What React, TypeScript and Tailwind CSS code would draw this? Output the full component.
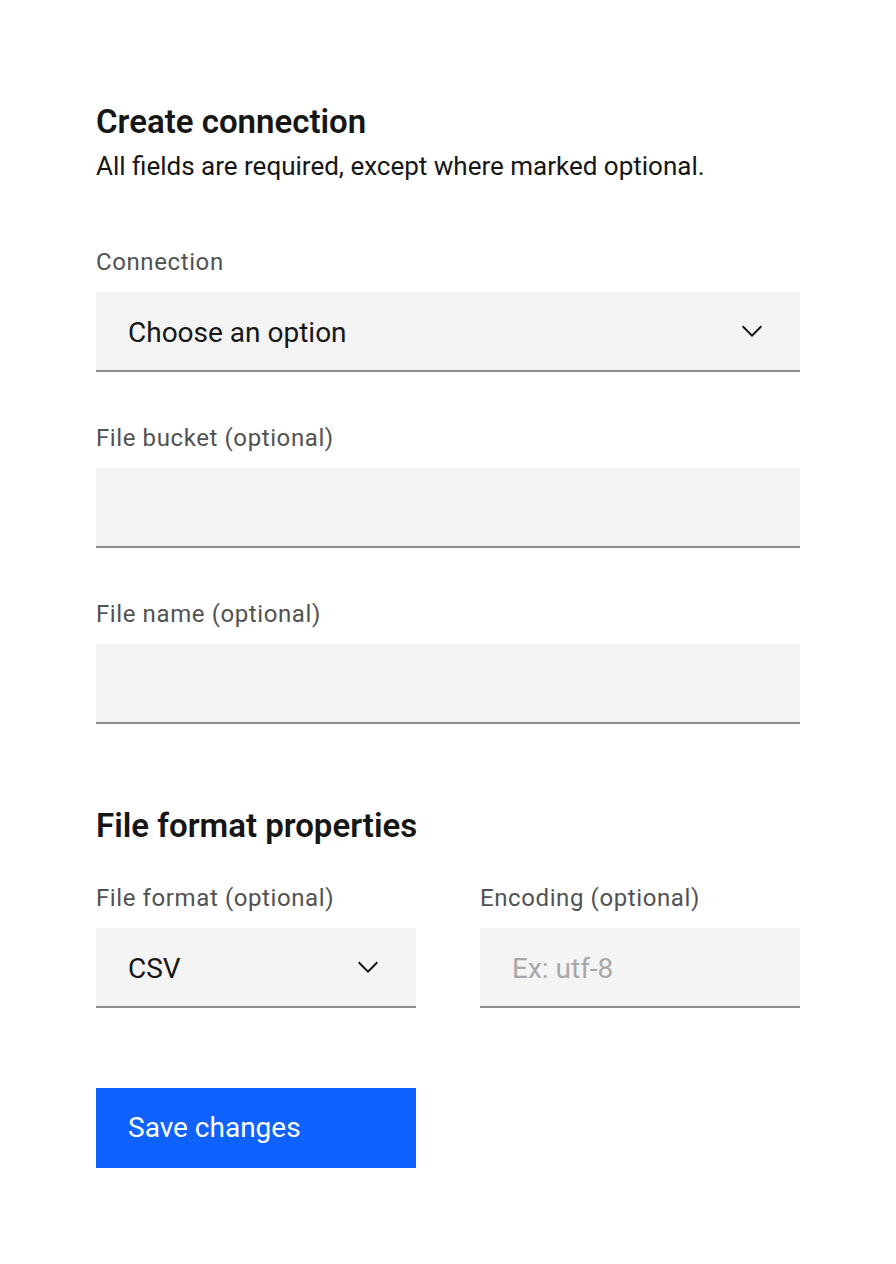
import React from "react";

function Chevron() {
  return (
    <svg width="32" height="32" viewBox="0 0 16 16" fill="#161616" className="shrink-0">
      <path d="M8 11L3 6 3.7 5.3 8 9.6 12.3 5.3 13 6z" />
    </svg>
  );
}

function Label({ children }: { children: React.ReactNode }) {
  return (
    <div className="text-[24px] leading-[32px] tracking-[0.6px] text-[#525252] pt-[2px] mb-[14px]">
      {children}
    </div>
  );
}

function SelectField({ value }: { value: string }) {
  return (
    <div className="h-20 bg-[#f4f4f4] border-b-2 border-[#8d8d8d] flex items-center justify-between pl-8 pr-8">
      <span className="text-[28px] text-[#161616] pt-1">{value}</span>
      <Chevron />
    </div>
  );
}

function TextField({ placeholder }: { placeholder?: string }) {
  return (
    <div className="h-20 bg-[#f4f4f4] border-b-2 border-[#8d8d8d] flex items-center pl-8 pr-8">
      {placeholder && (
        <span className="text-[28px] text-[#a8a8a8] pt-1">{placeholder}</span>
      )}
    </div>
  );
}

export default function App() {
  return (
    <div
      className="min-h-screen bg-white px-24 pt-[102px] text-[#161616]"
      style={{ fontFamily: "Roboto, 'Noto Sans', sans-serif" }}
    >
      <div className="w-[704px]">
        <h1 className="text-[33px] leading-[40px] font-semibold">Create connection</h1>
        <p className="text-[26px] leading-[32px] mt-[8px]">
          All fields are required, except where marked optional.
        </p>

        <div className="mt-[62px]">
          <Label>Connection</Label>
          <SelectField value="Choose an option" />
        </div>

        <div className="mt-[48px]">
          <Label>File bucket (optional)</Label>
          <TextField />
        </div>

        <div className="mt-[48px]">
          <Label>File name (optional)</Label>
          <TextField />
        </div>

        <h2 className="text-[33px] leading-[40px] font-semibold mt-[82px] mb-[2px]">
          File format properties
        </h2>

        <div className="grid grid-cols-2 gap-16 mt-[34px]">
          <div>
            <Label>File format (optional)</Label>
            <SelectField value="CSV" />
          </div>
          <div>
            <Label>Encoding (optional)</Label>
            <TextField placeholder="Ex: utf-8" />
          </div>
        </div>

        <button className="mt-20 w-[320px] h-20 bg-[#0f62fe] text-white text-[28px] text-left pl-8">
          Save changes
        </button>
      </div>
    </div>
  );
}
